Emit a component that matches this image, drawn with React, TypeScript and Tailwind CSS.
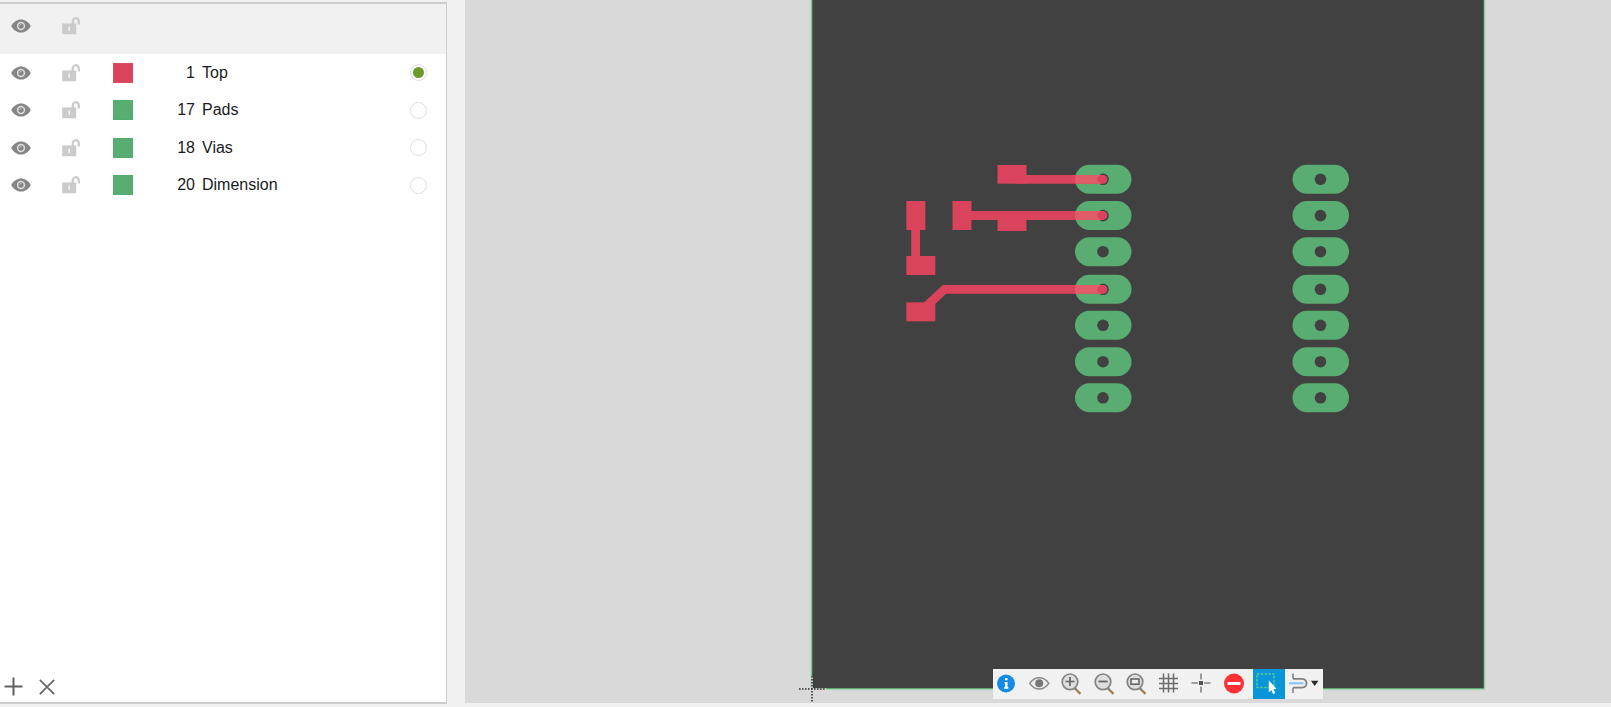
import { useState } from "react";
import type { ReactNode } from "react";

type Layer = { id: number; name: string; swatch: string };

const layers: Layer[] = [
  { id: 1, name: "Top", swatch: "bg-[#d9435b] border-[#df4c62]" },
  { id: 17, name: "Pads", swatch: "bg-[#59ac72] border-[#50ad6c]" },
  { id: 18, name: "Vias", swatch: "bg-[#59ac72] border-[#50ad6c]" },
  { id: 20, name: "Dimension", swatch: "bg-[#59ac72] border-[#50ad6c]" },
];

const padRows = [179, 215.3, 251.4, 289, 325, 361.4, 397.5];
const padColumns = [291, 508.5];

function EyeIcon() {
  return (
    <svg width="20" height="14" viewBox="0 0 20 14" aria-hidden="true">
      <path d="M0.200 7C2.400 2.800 6 0.400 10 0.400S17.600 2.800 19.800 7C17.600 11.200 14 13.600 10 13.600S2.400 11.200 0.200 7Z" fill="#868686" />
      <circle cx="10" cy="7" r="3.400" fill="none" stroke="#dedede" strokeWidth="1.500" />
      <path d="M8.600 6.600A1.600 1.600 0 0 1 10.200 5.400" fill="none" stroke="#d0d0d0" strokeWidth="1" />
    </svg>
  );
}

function UnlockIcon() {
  return (
    <svg width="18" height="18" viewBox="0 0 18 18" aria-hidden="true">
      <path d="M10.800 7.500V4.500A3 3.200 0 0 1 16.800 4.300V7.500" fill="none" stroke="#cccccc" strokeWidth="2.300" />
      <path d="M0.200 6.400H14.200V17.300H0.200Z" fill="#cbcbcb" />
      <path d="M7.200 9.500V14" stroke="#f4f4f4" strokeWidth="1.500" />
    </svg>
  );
}

function VisibilityControls({ label }: { label: string }) {
  return (
    <>
      <button type="button" aria-label={`Toggle visibility of ${label}`} className="flex w-5 justify-center">
        <EyeIcon />
      </button>
      <button type="button" aria-label={`Lock ${label}`} className="ml-[31px] flex w-[18px] justify-center">
        <UnlockIcon />
      </button>
    </>
  );
}

function LayerPanel() {
  const [active, setActive] = useState(1);
  return (
    <aside className="mt-[2px] mb-[3px] flex w-[447px] shrink-0 flex-col border-t-2 border-r border-b-2 border-[#cecece] bg-white">
      <header className="flex h-[50px] items-center bg-[#f1f1f1] pb-[6px] pl-[11px]">
        <VisibilityControls label="all layers" />
      </header>
      <ul className="flex h-[150px] flex-col">
        {layers.map((layer) => (
          <li key={layer.id} className="flex flex-1 items-center pr-[19px] pl-[11px]">
            <VisibilityControls label={layer.name} />
            <span className={`ml-[33px] size-5 border ${layer.swatch}`} />
            <label htmlFor={`layer-${layer.id}`} className="flex flex-1 items-center text-base leading-5 text-[#1a1a22]">
              <span className="w-[62px] text-right">{layer.id}</span>
              <span className="ml-[7px]">{layer.name}</span>
            </label>
            <input
              id={`layer-${layer.id}`}
              type="radio"
              name="active-layer"
              checked={active === layer.id}
              onChange={() => setActive(layer.id)}
              className="size-[17px] appearance-none rounded-full border border-[#dedede] bg-white bg-clip-content p-[2px] checked:bg-[#6b9a2a]"
            />
          </li>
        ))}
      </ul>
      <footer className="mt-auto flex items-center gap-4 pb-[6px] pl-1">
        <button type="button" aria-label="Add layer">
          <svg width="19" height="19" viewBox="0 0 19 19" aria-hidden="true">
            <path d="M9.500 0.500V18.500M0.500 9.500H18.500" stroke="#606060" strokeWidth="2" />
          </svg>
        </button>
        <button type="button" aria-label="Remove layer">
          <svg width="16" height="16" viewBox="0 0 16 16" aria-hidden="true">
            <path d="M0.800 0.800L15.200 15.200M15.200 0.800L0.800 15.200" stroke="#666666" strokeWidth="1.700" />
          </svg>
        </button>
      </footer>
    </aside>
  );
}

function Board() {
  return (
    <svg className="block size-full" role="img" aria-label="Board layout">
      <g transform="translate(347 0)">
        <rect x="-0.500" y="-5" width="672.500" height="693.500" fill="#414141" />
        <path d="M0 0V688.500H672V0" fill="none" stroke="#4f9a66" strokeWidth="1" />
        <path d="M-0.800 0V688M0 689.300H672.800V0" fill="none" stroke="#9ad3a9" strokeWidth="1" />
        {padColumns.map((x) =>
          padRows.map((y) => (
            <g key={`${x}-${y}`}>
              <rect x={x - 28} y={y - 14.2} width="56.500" height="29" rx="14.500" fill="#59ac72" />
              <circle cx={x} cy={y + 0.3} r="5.800" fill="#414141" />
            </g>
          )),
        )}
        <g fill="#d9435b">
          <rect x="185.500" y="165" width="29" height="18.700" />
          <rect x="140.500" y="201" width="19" height="29" />
          <rect x="185.500" y="211" width="29" height="20" />
          <rect x="94.300" y="201" width="19" height="29" />
          <rect x="94.300" y="256" width="29" height="19" />
          <rect x="94.300" y="302.300" width="29" height="19" />
        </g>
        <g fill="none" stroke="#d9435b" strokeWidth="8.800" strokeLinecap="round">
          <path d="M205 179.300H291" />
          <path d="M155 215.500H291" />
          <path d="M103.600 220V262" />
          <path d="M108 312L132.500 289.300H291" />
        </g>
        <g fill="#e05c69">
          {[179.3, 215.5, 289.3].map((y) => (
            <path key={y} d={`M263.500 ${y - 4.4}H290Q285.200 ${y - 3} 285.200 ${y}T290 ${y + 4.4}H263.500Q262.500 ${y} 263.500 ${y - 4.4}Z`} />
          ))}
        </g>
        <path d="M-13 689H14M0 676V703" stroke="#d9d9d9" strokeWidth="1.600" />
        <path d="M-13 689H14M0 676V703" stroke="#303030" strokeWidth="1.600" strokeDasharray="1.600 1.400" />
      </g>
    </svg>
  );
}

function Magnifier({ children }: { children: ReactNode }) {
  return (
    <>
      <path d="M17.500 20L22.500 24.800" stroke="#a08254" strokeWidth="2.400" />
      <path d="M16 18.500L18 20.500" stroke="#777777" strokeWidth="2" />
      <circle cx="12" cy="12.800" r="7.800" fill="#dedede" stroke="#858585" strokeWidth="1.700" />
      {children}
    </>
  );
}

const tools: { name: string; art: ReactNode }[] = [
  {
    name: "Info",
    art: (
      <>
        <circle cx="13" cy="14.500" r="9" fill="#168be6" />
        <path d="M12 9H14.500V11.300H12ZM11.500 12.900H14.500V18.300H15.500V19.800H11V18.300H12V14.300H11.500Z" fill="#ffffff" />
      </>
    ),
  },
  {
    name: "Show",
    art: (
      <>
        <path d="M3.700 14.300C6.300 10.500 9.500 8.700 13.200 8.700S20.200 10.500 22.800 14.300C20.200 18.200 16.900 20 13.200 20S6.300 18.200 3.700 14.300Z" fill="#eeeeee" stroke="#8b8b8b" strokeWidth="1.500" />
        <circle cx="13.200" cy="14.300" r="4" fill="#787878" />
      </>
    ),
  },
  { name: "Zoom in", art: <Magnifier><path d="M7.500 12.500H16.600M12 8V17" stroke="#666666" strokeWidth="1.700" /></Magnifier> },
  { name: "Zoom out", art: <Magnifier><path d="M7.500 12.500H16.600" stroke="#666666" strokeWidth="1.800" /></Magnifier> },
  { name: "Zoom to fit", art: <Magnifier><rect x="8" y="10" width="8" height="5.200" fill="#eeeeee" stroke="#666666" strokeWidth="1.600" /></Magnifier> },
  { name: "Grid", art: <path d="M7.500 4.500V23.500M12.500 4.500V23.500M17.500 4.500V23.500M3 9.500H22M3 14.500H22M3 19.500H22" stroke="#6c6c6c" strokeWidth="1.500" /> },
  {
    name: "Origin",
    art: (
      <>
        <path d="M13 4.500V10.500M13 17.500V23.500M3.500 14H9.700M16.200 14H22.500" stroke="#858585" strokeWidth="1.600" />
        <rect x="11" y="12" width="4" height="4" fill="#555555" />
      </>
    ),
  },
  {
    name: "Stop",
    art: (
      <>
        <circle cx="13" cy="14.500" r="10" fill="#fd3033" />
        <rect x="6.500" y="13" width="13" height="3" fill="#ffffff" />
      </>
    ),
  },
];

function Toolbar() {
  return (
    <div role="toolbar" aria-label="Board tools" className="absolute bottom-1 left-[528px] flex h-[30px] bg-[#f1f1f1]">
      <div className="grid w-[260px] grid-cols-8">
        {tools.map((tool) => (
          <button key={tool.name} type="button" aria-label={tool.name}>
            <svg width="32" height="30" viewBox="0 0 32 30" fill="none" aria-hidden="true">
              {tool.art}
            </svg>
          </button>
        ))}
      </div>
      <button type="button" aria-label="Select area" aria-pressed="true" className="bg-[#0996d9]">
        <svg width="32" height="30" viewBox="0 0 32 30" fill="none" aria-hidden="true">
          <rect x="4" y="5" width="17" height="13.400" stroke="#53ca91" strokeWidth="1.500" strokeDasharray="2.600 1.200" />
          <path d="M15.800 11.500V23.300L18.200 21.200L20.200 25L22.300 23.900L20.400 20.200L23.500 19.800Z" fill="#ffffff" />
        </svg>
      </button>
      <button type="button" aria-label="Route">
        <svg width="38" height="30" viewBox="0 0 38 30" fill="none" aria-hidden="true">
          <path d="M8 4.500V9.800M8 18.800V24" stroke="#858585" strokeWidth="1.600" />
          <path d="M8 9.900H17Q21.500 10.300 21.500 14.300T17 18.700H8" stroke="#808080" strokeWidth="1.800" />
          <path d="M4 14.300H18.500" stroke="#8cc7f5" strokeWidth="2.200" />
          <path d="M26 11.800H33.500L29.700 17Z" fill="#2b2b2b" />
        </svg>
      </button>
    </div>
  );
}

export default function App() {
  return (
    <div className="flex h-screen w-full gap-[18px] overflow-hidden bg-[#f1f1f1] font-['Liberation_Sans',Arial,sans-serif]">
      <LayerPanel />
      <main className="relative mb-1 min-w-0 flex-1 overflow-hidden bg-[#d9d9d9]">
        <Board />
        <Toolbar />
      </main>
    </div>
  );
}
